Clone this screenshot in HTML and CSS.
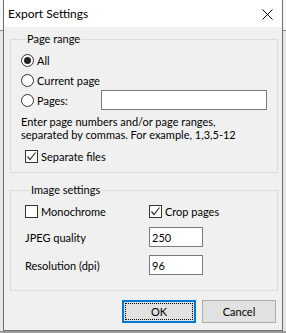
FILE: index.html
```html
<!DOCTYPE html>
<html>
<head>
<meta charset="utf-8">
<link rel="stylesheet" href="styles.css">
</head>
<body>
<div class="window">
  <div class="titlebar">
    <span class="title">Export Settings</span>
    <svg class="close" width="11" height="11" viewBox="0 0 11 11"><path d="M0.5 0.5L10.5 10.5M10.5 0.5L0.5 10.5" stroke="#000" stroke-width="1" fill="none"/></svg>
  </div>
  <div class="content">
    <fieldset class="group group-range">
      <legend>Page range</legend>
      <div class="row"><span class="radio checked"></span><span>All</span></div>
      <div class="row"><span class="radio"></span><span>Current page</span></div>
      <div class="row"><span class="radio"></span><span>Pages:</span><input class="field field-pages" type="text" value=""></div>
      <p class="help">Enter page numbers and/or page ranges,<br>separated by commas. For example, 1,3,5-12</p>
      <div class="row row-check"><span class="check checked"><svg width="11" height="11" viewBox="0 0 11 11"><path d="M1.5 5.5L4 8.5L9.5 1.5" stroke="#333" stroke-width="1.2" fill="none"/></svg></span><span>Separate files</span></div>
    </fieldset>
    <fieldset class="group group-image">
      <legend>Image settings</legend>
      <div class="row row-first">
        <div class="cell"><span class="check"></span><span>Monochrome</span></div>
        <div class="cell-right"><span class="check checked"><svg width="11" height="11" viewBox="0 0 11 11"><path d="M1.5 5.5L4 8.5L9.5 1.5" stroke="#333" stroke-width="1.2" fill="none"/></svg></span><span>Crop pages</span></div>
      </div>
      <div class="row row-jpeg">
        <div class="cell">JPEG quality</div>
        <input class="field field-small" type="text" value="250">
      </div>
      <div class="row row-res">
        <div class="cell">Resolution (dpi)</div>
        <input class="field field-small" type="text" value="96">
      </div>
    </fieldset>
    <div class="buttons">
      <button class="btn btn-default"><span class="focus">OK</span></button>
      <button class="btn">Cancel</button>
    </div>
  </div>
</div>
</body>
</html>
```
FILE: styles.css
```css
* { box-sizing: border-box; }
html, body { margin: 0; padding: 0; }
body {
  width: 286px;
  height: 333px;
  overflow: hidden;
  background: linear-gradient(to bottom, #f7f7f7 0, #f7f7f7 30px, #8a8a8a 30px, #8a8a8a 31px, #e6e6e6 31px, #e6e6e6 331px, #9a9a9a 331px);
  font-family: Lato, "Liberation Sans", sans-serif;
  font-size: 11px;
  color: #000;
}
.window {
  margin-left: 3px;
  width: 280px;
  height: 331px;
  border: 1px solid #6f6f6f;
  border-top: 0;
  background: #f0f0f0;
  display: flex;
  flex-direction: column;
}
.titlebar {
  height: 27px;
  flex: none;
  background: #fff;
  display: flex;
  align-items: center;
  justify-content: space-between;
  padding: 0 9px 0 4px;
}
.title { font-size: 12px; }
.close { margin-top: 1px; }
.content {
  padding: 5px 4px 0 6px;
  display: flex;
  flex-direction: column;
}
.group {
  margin: 0;
  padding: 4px 10px 6px 10px;
  border: 1px solid #dcdcdc;
  min-width: 0;
}
.group legend {
  margin-left: 5px;
  padding: 0 1px;
  line-height: 14px;
  font-size: 11px;
}
.group-image { margin-top: 10px; padding-bottom: 15px; padding-left: 14px; }
.row {
  display: flex;
  align-items: center;
  height: 20px;
}
.radio {
  width: 13px;
  height: 13px;
  border-radius: 50%;
  border: 1px solid #333;
  background: #fff;
  margin-right: 3px;
  display: flex;
  align-items: center;
  justify-content: center;
  flex: none;
}
.radio.checked::after {
  content: "";
  width: 7px;
  height: 7px;
  border-radius: 50%;
  background: #222;
}
.check {
  width: 13px;
  height: 13px;
  border: 1px solid #333;
  background: #fff;
  margin-right: 3px;
  display: flex;
  align-items: center;
  justify-content: center;
  flex: none;
}
.field {
  height: 20px;
  border: 1px solid #7a7a7a;
  background: #fff;
  padding: 0 2px;
  font-family: inherit;
  font-size: 11px;
  color: #000;
  outline: none;
  margin: 0;
}
.field-pages { width: 166px; margin-left: auto; }
.field-small { width: 54px; }
.help {
  margin: 5px 0 0 0;
  line-height: 13px;
}
.row-check { margin-top: 5px; padding-left: 4px; }
.cell { width: 124px; display: flex; align-items: center; flex: none; }
.cell-right { display: flex; align-items: center; }
.row-jpeg { margin-top: 6px; }
.row-res { margin-top: 8px; }
.buttons {
  display: flex;
  justify-content: flex-end;
  gap: 6px;
  margin-top: 9px;
  margin-right: 2px;
}
.btn {
  width: 74px;
  height: 23px;
  background: #e1e1e1;
  border: 1px solid #adadad;
  font-family: inherit;
  font-size: 11px;
  color: #000;
  padding: 0;
  margin: 0;
  display: flex;
  align-items: center;
  justify-content: center;
}
.btn-default {
  border: 2px solid #0078d7;
  padding: 1px;
}
.focus {
  flex: 1;
  align-self: stretch;
  border: 1px dotted #000;
  display: flex;
  align-items: center;
  justify-content: center;
}
```
